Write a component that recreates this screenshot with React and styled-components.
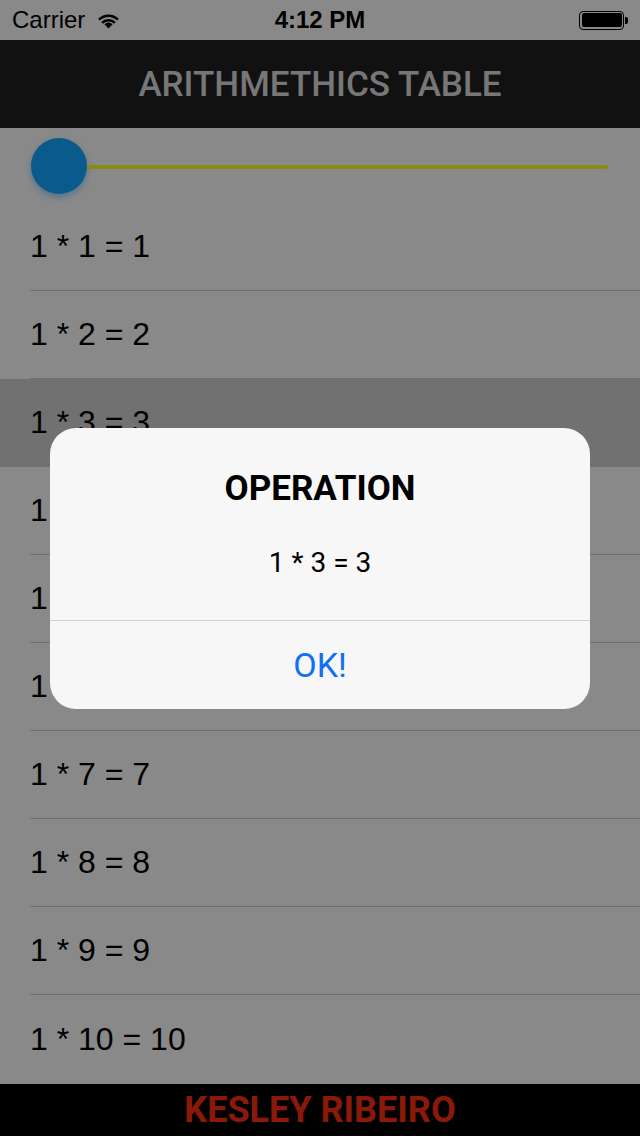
import React from 'react';
import styled, { createGlobalStyle } from 'styled-components';

const GlobalStyle = createGlobalStyle`
  html, body {
    margin: 0;
    padding: 0;
    background: #e4e4e4;
  }
  * {
    box-sizing: border-box;
  }
`;

const Screen = styled.div`
  position: relative;
  width: 640px;
  height: 1136px;
  display: flex;
  flex-direction: column;
  background-color: #e4e4e4;
  font-family: Roboto, "Liberation Sans", sans-serif;
  overflow: hidden;
`;

const StatusBar = styled.div`
  height: 40px;
  display: grid;
  grid-template-columns: 1fr auto 1fr;
  align-items: center;
  padding: 0 12px 0 12px;
  font-family: "Liberation Sans", Arial, sans-serif;
  font-size: 24px;
  color: #000;
`;

const Carrier = styled.div`
  display: flex;
  align-items: center;
  gap: 11px;
`;

const Clock = styled.div`
  font-weight: 700;
  font-size: 24px;
`;

const Battery = styled.div`
  justify-self: end;
  display: flex;
  align-items: center;
`;

const BatteryBody = styled.div`
  width: 45px;
  height: 19px;
  border: 1.5px solid #000;
  border-radius: 4px;
  padding: 1.5px;
  &::after {
    content: '';
    display: block;
    width: 100%;
    height: 100%;
    background: #000;
    border-radius: 2px;
  }
`;

const BatteryTip = styled.div`
  width: 3px;
  height: 7px;
  margin-left: 1px;
  background: #000;
  border-radius: 0 2px 2px 0;
`;

const Header = styled.div`
  height: 88px;
  display: flex;
  align-items: center;
  justify-content: center;
  background-color: #1d1d1d;
  color: #c6c6c6;
  font-size: 35px;
  font-weight: 500;
`;

const SliderWrap = styled.div`
  height: 75px;
  display: flex;
  align-items: center;
  padding: 0 32px 0 31px;
`;

const Thumb = styled.div`
  width: 56px;
  height: 56px;
  flex-shrink: 0;
  border-radius: 50%;
  background-color: #1296e9;
  box-shadow: 0 3px 6px rgba(18, 150, 233, 0.45);
`;

const Track = styled.div`
  flex: 1;
  height: 4px;
  margin-top: 3px;
  border-radius: 2px;
  background-color: #e6e621;
`;

const List = styled.div`
  flex: 1;
  display: flex;
  flex-direction: column;
`;

const Row = styled.div`
  height: 88px;
  flex-shrink: 0;
  padding-left: 30px;
  background-color: ${props => (props.selected ? '#bcbcbc' : 'transparent')};
`;

const RowInner = styled.div`
  height: 100%;
  display: flex;
  align-items: center;
  font-family: "Liberation Sans", Arial, sans-serif;
  font-size: 32px;
  color: #000;
  border-bottom: ${props => (props.last ? 'none' : '1px solid #b8b8b8')};
`;

const Footer = styled.div`
  height: 52px;
  display: flex;
  align-items: center;
  justify-content: center;
  background-color: #000;
  color: #e82b12;
  font-size: 36px;
  font-weight: 700;
`;

const Overlay = styled.div`
  position: absolute;
  inset: 0;
  background-color: rgba(0, 0, 0, 0.4);
  display: flex;
  align-items: center;
  justify-content: center;
`;

const Alert = styled.div`
  width: 540px;
  border-radius: 26px;
  background-color: #f7f7f7;
  display: flex;
  flex-direction: column;
  overflow: hidden;
`;

const AlertBody = styled.div`
  height: 192px;
  display: flex;
  flex-direction: column;
  align-items: center;
  padding-top: 40px;
`;

const AlertTitle = styled.div`
  font-size: 35px;
  font-weight: 700;
  color: #000;
`;

const AlertMessage = styled.div`
  margin-top: 37px;
  font-size: 28px;
  color: #000;
`;

const AlertButton = styled.button`
  height: 89px;
  border: none;
  border-top: 1px solid #d2d2d2;
  background: transparent;
  font-family: Roboto, "Liberation Sans", sans-serif;
  font-size: 34px;
  color: #0f6ff5;
  cursor: pointer;
`;

const WifiIcon = () => (
  <svg width="25" height="18" viewBox="0 0 25 18">
    <path d="M12.5 17.5 L8.4 13.2 A6 6 0 0 1 16.6 13.2 Z" fill="#000" />
    <path d="M5.2 10.9 A10.4 10.4 0 0 1 19.8 10.9 L18 12.7 A7.9 7.9 0 0 0 7 12.7 Z" fill="#000" />
    <path d="M2.1 7.7 A14.8 14.8 0 0 1 22.9 7.7 L21.1 9.5 A12.3 12.3 0 0 0 3.9 9.5 Z" fill="#000" />
  </svg>
);

const App = () => {
  const rows = Array.from({ length: 10 }, (_, i) => i + 1);

  return (
    <>
      <GlobalStyle />
      <Screen>
        <StatusBar>
          <Carrier>
            Carrier
            <WifiIcon />
          </Carrier>
          <Clock>4:12 PM</Clock>
          <Battery>
            <BatteryBody />
            <BatteryTip />
          </Battery>
        </StatusBar>

        <Header>ARITHMETHICS TABLE</Header>

        <SliderWrap>
          <Thumb />
          <Track />
        </SliderWrap>

        <List>
          {rows.map(n => (
            <Row key={n} selected={n === 3}>
              <RowInner last={n === 10}>{`1 * ${n} = ${n}`}</RowInner>
            </Row>
          ))}
        </List>

        <Footer>KESLEY RIBEIRO</Footer>

        <Overlay>
          <Alert>
            <AlertBody>
              <AlertTitle>OPERATION</AlertTitle>
              <AlertMessage>1 * 3 = 3</AlertMessage>
            </AlertBody>
            <AlertButton>OK!</AlertButton>
          </Alert>
        </Overlay>
      </Screen>
    </>
  );
};

export default App;
